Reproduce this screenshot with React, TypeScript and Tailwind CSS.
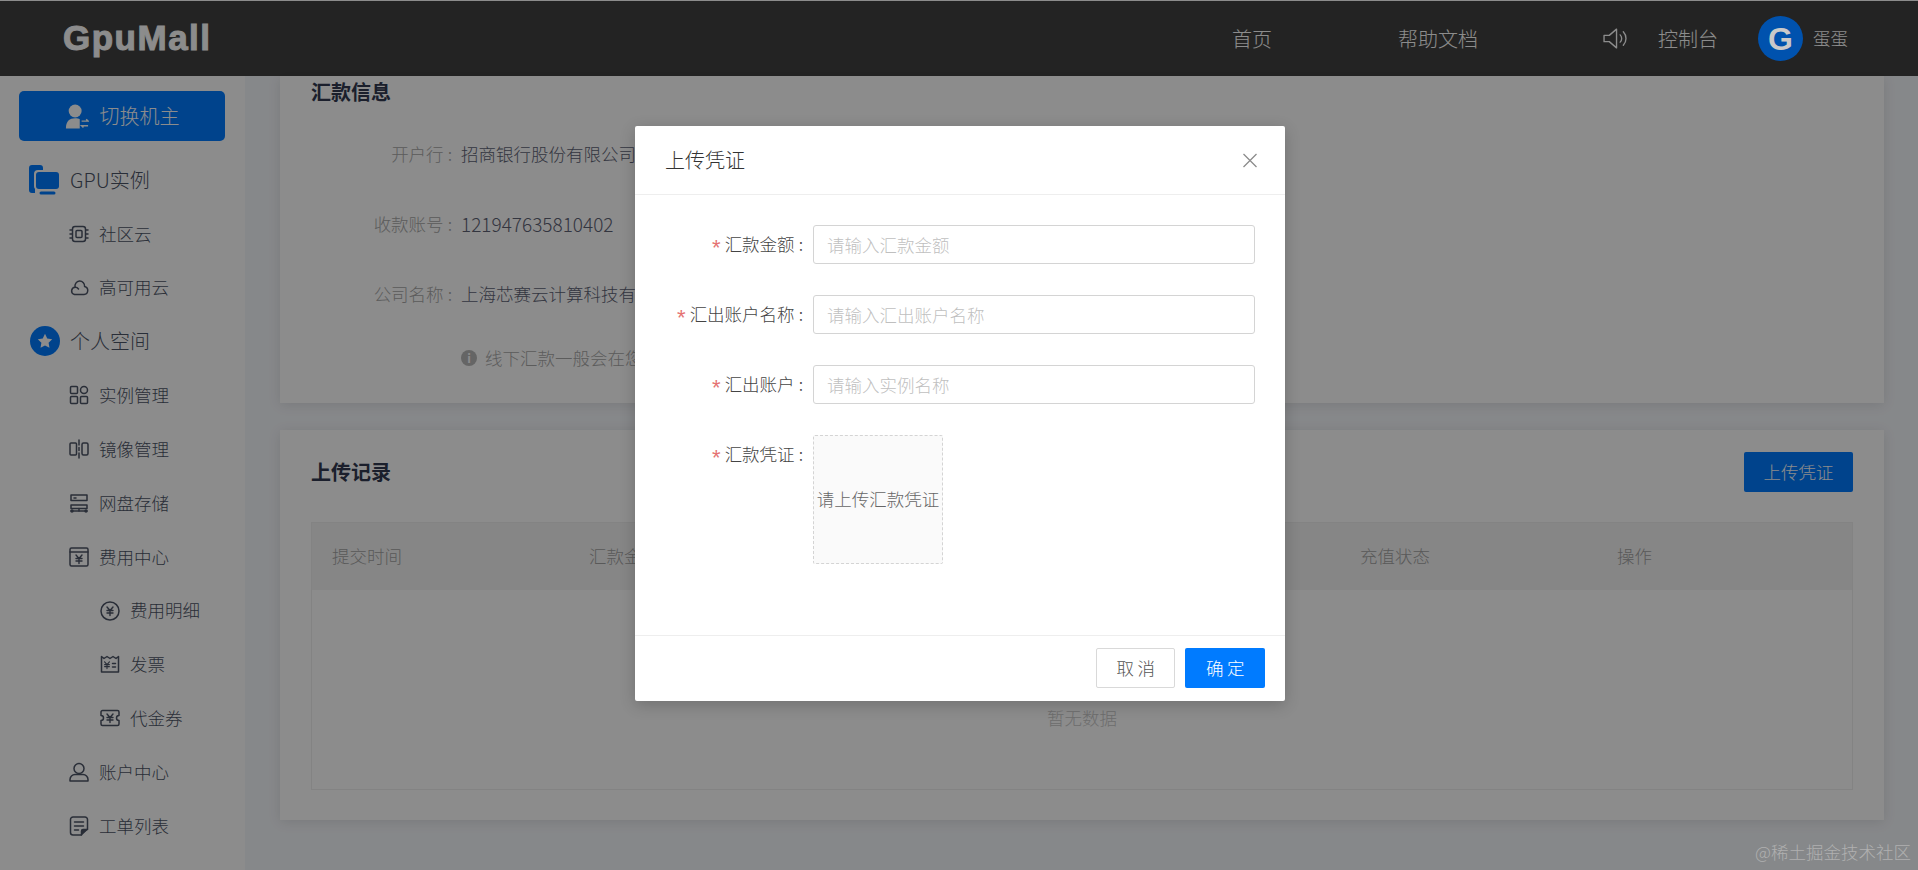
import type { ReactNode } from "react";

function Svg({ children, className = "w-5 h-5" }: { children: ReactNode; className?: string }) {
  return (
    <svg viewBox="0 0 20 20" fill="none" stroke="currentColor" strokeWidth="1.5" strokeLinecap="round" strokeLinejoin="round" className={`${className} shrink-0`}>
      {children}
    </svg>
  );
}

const Yen = ({ x = 10, y = 10, s = 1 }: { x?: number; y?: number; s?: number }) => (
  <g transform={`translate(${x} ${y}) scale(${s})`} strokeWidth="1.4">
    <path d="M-3 -4 0 -0.5 3 -4M-3 -0.5H3M-3 2H3M0 -0.5V4.5" />
  </g>
);

const icons: Record<string, ReactNode> = {
  cpu: (
    <Svg>
      <rect x="3.5" y="2.5" width="13" height="15" rx="2.5" />
      <rect x="7" y="6.5" width="6" height="7" rx="1" />
      <path d="M1 6h2M1 10h2M1 14h2M17 6h2M17 10h2M17 14h2" />
    </Svg>
  ),
  cloud: (
    <Svg>
      <path d="M5.5 16.5h9.5a4 4 0 0 0 .6-7.9A5 5 0 0 0 10.5 3a5 5 0 0 0-4.4 6.2 3.7 3.7 0 0 0-.6 7.3Z" />
      <path d="M6.1 9.2a4 4 0 0 1 3.4 1.8" />
    </Svg>
  ),
  apps: (
    <Svg>
      <rect x="1.5" y="1.5" width="7" height="7" rx="1" />
      <rect x="1.5" y="11.5" width="7" height="7" rx="1" />
      <rect x="11.5" y="11.5" width="7" height="7" rx="1" />
      <circle cx="15" cy="5" r="3.5" />
    </Svg>
  ),
  mirror: (
    <Svg>
      <rect x="1" y="4" width="6.5" height="12" rx="1" />
      <rect x="13" y="4" width="6" height="12" rx="1.5" />
      <path d="M10 1v5M10 8.5v3M10 14v5" />
    </Svg>
  ),
  disk: (
    <Svg>
      <path d="M2 2h16v5.5H2zM4 12h14v3.5H2V12z" />
      <path d="M5 5h2M2 18h16" />
      <circle cx="3" cy="18" r="1" />
      <circle cx="17" cy="18" r="1" />
      <path d="M10 15.5V18" />
    </Svg>
  ),
  fee: (
    <Svg>
      <rect x="1" y="1" width="18" height="18" rx="1.5" />
      <path d="M1 5h18" />
      <Yen y={12} />
    </Svg>
  ),
  yenCircle: (
    <Svg>
      <circle cx="10" cy="10" r="9" />
      <Yen />
    </Svg>
  ),
  invoice: (
    <Svg>
      <path d="M1.5 2.5 4 4.5 7 2.5 10 4.5 13 2.5 16 4.5 18.5 2.5V18H1.5Z" />
      <Yen x={7} y={11} s={0.8} />
      <path d="M12.5 9.5h3M12.5 13h3" />
    </Svg>
  ),
  voucher: (
    <Svg>
      <path d="M2.5 2.5h15a1.5 1.5 0 0 1 1.5 1.5v3.5a2.5 2.5 0 0 0 0 5V16a1.5 1.5 0 0 1-1.5 1.5h-15A1.5 1.5 0 0 1 1 16v-3.5a2.5 2.5 0 0 0 0-5V4a1.5 1.5 0 0 1 1.5-1.5Z" />
      <Yen />
    </Svg>
  ),
  user: (
    <Svg>
      <circle cx="10" cy="6.5" r="5" />
      <path d="M1 19v-1.5a5 5 0 0 1 5-5h8a5 5 0 0 1 5 5V19Z" />
    </Svg>
  ),
  ticket: (
    <Svg>
      <path d="M12 19H4a2.5 2.5 0 0 1-2.5-2.5v-13A2.5 2.5 0 0 1 4 1h12a2.5 2.5 0 0 1 2.5 2.5V13Z" />
      <path d="M5.5 6h9M5.5 10h9M5.5 14h4" />
      <path d="M12.5 19v-4a1.5 1.5 0 0 1 1.5-1.5h4.5" fill="currentColor" />
    </Svg>
  ),
};

const menu = [
  { label: "社区云", icon: "cpu", level: 1 },
  { label: "高可用云", icon: "cloud", level: 1 },
];
const menu2 = [
  { label: "实例管理", icon: "apps", level: 1 },
  { label: "镜像管理", icon: "mirror", level: 1 },
  { label: "网盘存储", icon: "disk", level: 1 },
  { label: "费用中心", icon: "fee", level: 1 },
  { label: "费用明细", icon: "yenCircle", level: 2 },
  { label: "发票", icon: "invoice", level: 2 },
  { label: "代金券", icon: "voucher", level: 2 },
  { label: "账户中心", icon: "user", level: 1 },
  { label: "工单列表", icon: "ticket", level: 1 },
];

function MenuItem({ label, icon, level }: { label: string; icon: string; level: number }) {
  return (
    <div className={`h-[53.83px] flex items-center gap-[10px] text-[17.5px] text-[#4c5466] ${level === 2 ? "pl-[100px]" : "pl-[69px]"}`}>
      {icons[icon]}
      <span>{label}</span>
    </div>
  );
}

function Sidebar() {
  return (
    <aside className="w-[245px] shrink-0 bg-white pt-[15px]">
      <div className="mx-[19px] w-[206px] h-[50px] rounded-[5px] bg-[#007bff] flex items-center justify-center gap-[11px] text-[20px] text-white">
        <svg viewBox="0 0 26 28" className="w-[24px] h-[27px]" fill="currentColor">
          <circle cx="11" cy="8" r="7" />
          <path d="M1 27c0-8 4-11 10-11 2 0 4 .4 5 1v10Z" />
          <path d="M18 19h7l-2-2M25 24h-7l2 2" fill="none" stroke="currentColor" strokeWidth="1.6" />
        </svg>
        <span>切换机主</span>
      </div>
      <div className="mt-[12px]">
        <div className="h-[53.83px] flex items-center pl-[29px] gap-[11px] text-[20px] text-[#4c5466]">
          <svg viewBox="0 0 30 30" className="w-[30px] h-[30px] shrink-0">
            <path d="M3 0h8a3 3 0 0 1 3 3v2H9a4 4 0 0 0-4 4v12a4 4 0 0 0 1 3v4H3a3 3 0 0 1-3-3V3a3 3 0 0 1 3-3Z" fill="#007bff" />
            <rect x="7" y="7" width="23" height="17" rx="3" fill="#007bff" />
            <path d="M12 28h13" stroke="#007bff" strokeWidth="3" strokeLinecap="round" />
          </svg>
          <span>GPU实例</span>
        </div>
        {menu.map((m) => (
          <MenuItem key={m.label} {...m} />
        ))}
        <div className="h-[53.83px] flex items-center pl-[30px] gap-[10px] text-[20px] text-[#4c5466]">
          <div className="w-[30px] h-[30px] rounded-full bg-[#007bff] flex items-center justify-center text-white">
            <svg viewBox="0 0 20 20" className="w-[16px] h-[16px]" fill="currentColor">
              <path d="m10 1 2.8 5.8 6.2.9-4.5 4.4 1.1 6.4L10 15.5l-5.6 3 1.1-6.4L1 7.7l6.2-.9Z" />
            </svg>
          </div>
          <span>个人空间</span>
        </div>
        {menu2.map((m) => (
          <MenuItem key={m.label} {...m} />
        ))}
      </div>
    </aside>
  );
}

function InfoRow({ label, children, className }: { label: string; children: ReactNode; className: string }) {
  return (
    <div className={`flex items-center h-[32px] ${className}`}>
      <span className="w-[141px] text-right text-[17.5px] text-[#a8a8a8]">
        {label}
        <span className="ml-[4px]">:</span>
      </span>
      <div className="ml-[9px] text-[17.5px] text-[#5d6274] whitespace-nowrap">{children}</div>
    </div>
  );
}

function MainContent() {
  const columns = ["提交时间", "汇款金额", "汇出账户名称", "汇出账户", "充值状态", "操作"];
  return (
    <main className="flex-1 min-w-0 pl-[35px] pr-[34px] bg-[#f5f7fb]">
      <section className="h-[327px] pl-[31px] bg-white shadow-[0_2px_12px_rgba(0,0,0,0.1)]">
        <h2 className="h-[32px] flex items-center text-[20px] font-bold text-[#323a50]">汇款信息</h2>
        <InfoRow label="开户行" className="mt-[30px]">招商银行股份有限公司</InfoRow>
        <InfoRow label="收款账号" className="mt-[38px]">
          <span className="text-[19px]">121947635810402</span>
        </InfoRow>
        <InfoRow label="公司名称" className="mt-[38px]">上海芯赛云计算科技有</InfoRow>
        <div className="mt-[32px] h-[32px] pl-[150px] flex items-center gap-[8px] text-[17.5px] text-[#a8a8a8]">
          <span className="w-[16px] h-[16px] rounded-full bg-[#b8b8b8] text-white text-[12px] font-bold flex items-center justify-center">i</span>
          <span className="whitespace-nowrap">线下汇款一般会在您</span>
        </div>
      </section>

      <section className="mt-[27px] h-[390px] px-[31px] pt-[22px] bg-white shadow-[0_2px_12px_rgba(0,0,0,0.1)]">
        <div className="flex items-center justify-between h-[40px]">
          <h2 className="text-[20px] font-bold text-[#323a50]">上传记录</h2>
          <button className="w-[109px] h-[40px] rounded-[2px] bg-[#007bff] text-[17.5px] text-white">上传凭证</button>
        </div>
        <div className="mt-[30px] h-[268px] border border-[#eeeeee] flex flex-col">
          <div className="h-[67px] bg-[#f5f5f5] pl-[20px] grid grid-cols-[repeat(6,257px)] items-center text-[17.5px] text-[#a3a3a3]">
            {columns.map((c) => (
              <span key={c} className="whitespace-nowrap">{c}</span>
            ))}
          </div>
          <div className="flex-1 flex items-center justify-center pt-[58px] text-[17.5px] text-[#c8c8c8]">暂无数据</div>
        </div>
      </section>
    </main>
  );
}

function Label({ text }: { text: string }) {
  return (
    <label className="w-[168px] shrink-0 text-right text-[17.5px] text-[#444]">
      <span className="relative top-[4px] mr-[4px] font-['Liberation_Sans',sans-serif] text-[22px] leading-none text-[#e57373]">*</span>
      {text}
      <span className="ml-[4px]">:</span>
    </label>
  );
}

function FormRow({ label, placeholder }: { label: string; placeholder: string }) {
  return (
    <div className="flex items-center gap-[10px] mb-[31px]">
      <Label text={label} />
      <input
        placeholder={placeholder}
        className="w-[442px] h-[39px] px-[13px] border border-[#d4d4d4] rounded-[3px] text-[17.5px] outline-none placeholder:text-[#bfbfbf]"
      />
    </div>
  );
}

function UploadModal() {
  return (
    <div className="absolute z-10 left-[635px] top-[126px] w-[650px] h-[575px] bg-white rounded-[2px] shadow-[0_4px_16px_rgba(0,0,0,0.2)] flex flex-col">
      <div className="h-[69px] shrink-0 border-b border-[#eeeeee] pl-[30px] pr-[28px] flex items-center justify-between">
        <h3 className="text-[20px] text-[#333]">上传凭证</h3>
        <svg viewBox="0 0 14 14" className="w-[14px] h-[15px]" stroke="#8c8c8c" strokeWidth="1.3">
          <path d="M0.5 0.5 13.5 13.5M13.5 0.5 0.5 13.5" />
        </svg>
      </div>
      <div className="flex-1 pt-[30px]">
        <FormRow label="汇款金额" placeholder="请输入汇款金额" />
        <FormRow label="汇出账户名称" placeholder="请输入汇出账户名称" />
        <FormRow label="汇出账户" placeholder="请输入实例名称" />
        <div className="flex items-start gap-[10px]">
          <div className="pt-[6px] flex">
            <Label text="汇款凭证" />
          </div>
          <div className="w-[130px] h-[129px] bg-[#fafafa] border border-dashed border-[#d4d4d4] rounded-[2px] flex items-center justify-center text-[17.5px] text-[#666] whitespace-nowrap">
            请上传汇款凭证
          </div>
        </div>
      </div>
      <div className="h-[66px] shrink-0 border-t border-[#eeeeee] pr-[20px] pt-[12px] flex items-start justify-end gap-[10px]">
        <button className="w-[79px] h-[40px] pl-[4px] border border-[#d9d9d9] rounded-[2px] text-[17.5px] tracking-[0.2em] text-[#555]">取消</button>
        <button className="w-[80px] h-[40px] pl-[4px] bg-[#007bff] rounded-[2px] text-[17.5px] tracking-[0.2em] text-white">确定</button>
      </div>
    </div>
  );
}

export default function App() {
  return (
    <div className="relative w-[1918px] h-[870px] overflow-hidden bg-[#f5f7fb] font-['Noto_Sans_CJK_SC','Liberation_Sans',sans-serif] font-light">
      <header className="h-[76px] bg-[#414141] border-t border-white flex items-center">
        <div className="pl-[63px] font-['Liberation_Sans',sans-serif] font-bold text-[35px] tracking-[1.5px] [-webkit-text-stroke:1px_white] text-white">GpuMall</div>
        <nav className="ml-auto flex items-center text-[20px] text-white">
          <span>首页</span>
          <span className="ml-[126px]">帮助文档</span>
          <svg viewBox="0 0 24 24" className="ml-[125px] w-[25px] h-[25px]" fill="none" stroke="currentColor" strokeWidth="1.3" strokeLinejoin="round" strokeLinecap="round">
            <path d="M1 9h5l7-6v18l-7-6H1Z" />
            <path d="M16.5 8.5a5 5 0 0 1 0 7M19.5 5.5a9.5 9.5 0 0 1 0 13" />
          </svg>
          <span className="ml-[30px]">控制台</span>
          {/* avatar image stays brighter than the mask in the shot */}
          <div className="relative z-[5] ml-[40px] w-[45px] h-[45px] rounded-full bg-[#0052ae] flex items-center justify-center font-['Liberation_Sans',sans-serif] font-bold text-[32px] text-[#c9c9c9]">G</div>
          <span className="ml-[10px] mr-[70px] text-[17.5px]">蛋蛋</span>
        </nav>
      </header>
      <div className="flex h-[794px]">
        <Sidebar />
        <MainContent />
      </div>
      {/* dialog mask */}
      <div className="absolute inset-0 bg-black/45" />
      <UploadModal />
      <div className="absolute z-20 right-[7px] bottom-[5px] text-[17.5px] text-[#b0b0b0]">@稀土掘金技术社区</div>
    </div>
  );
}
